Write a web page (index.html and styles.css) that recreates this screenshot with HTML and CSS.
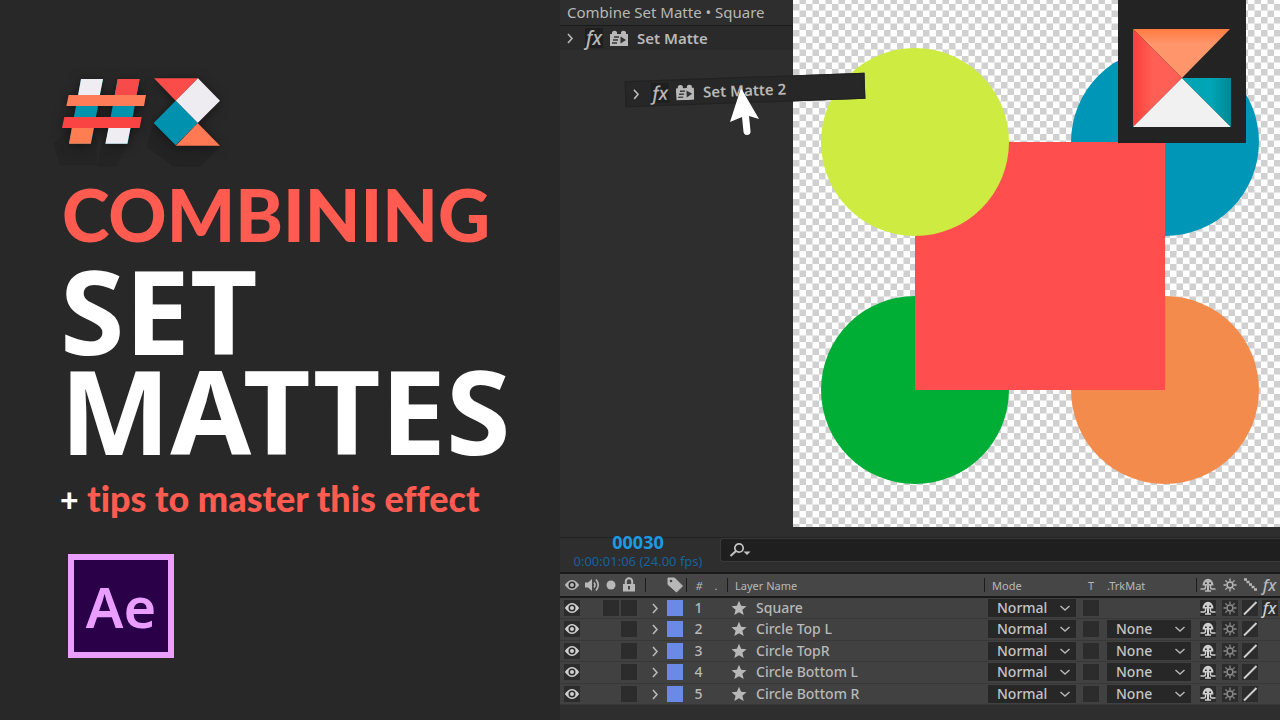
FILE: index.html
```
<!DOCTYPE html>
<html lang="en">
<head>
    <meta charset="UTF-8">
    <meta name="viewport" content="width=device-width, initial-scale=1.0">
    <link rel="stylesheet" href="styles.css">
    <title>Combining Set Mattes</title>
</head>
<body>

<svg class="sprite" aria-hidden="true">
    <symbol id="eye" viewBox="0 0 16 16">
        <path d="M.8 8Q8-2 15.200 8Q8 18 .8 8z" fill="currentColor"/>
        <circle cx="8" cy="8" r="3.500" fill="#2a2a2a"/>
        <circle cx="8" cy="8" r="2" fill="currentColor"/>
    </symbol>
    <symbol id="audio" viewBox="0 0 16 16">
        <path d="M0 5.500h3L7 2v12L3 10.500H0z" fill="currentColor"/>
        <path d="M9 5.500q2 2.500 0 5M11 2.500q4.500 5.500 0 11" fill="none" stroke="currentColor" stroke-width="1.600"/>
    </symbol>
    <symbol id="solo" viewBox="0 0 16 16">
        <circle cx="8" cy="8" r="4.500" fill="currentColor"/>
    </symbol>
    <symbol id="lock" viewBox="0 0 16 16">
        <path d="M4.800 8V4.500a3.200 3.200 0 0 1 6.400 0V8" fill="none" stroke="currentColor" stroke-width="2"/>
        <path d="M2 7h12v7.500H2z" fill="currentColor"/>
        <path d="M8 9v3.500" stroke="#3a3a3a" stroke-width="1.800"/>
    </symbol>
    <symbol id="tag" viewBox="0 0 16 16">
        <path d="M1 1h6.500L15.500 9 9.500 15 1 7.500z" fill="currentColor" stroke="currentColor" stroke-linejoin="round"/>
        <circle cx="4" cy="4" r="1.300" fill="#444"/>
    </symbol>
    <symbol id="chevron" viewBox="0 0 16 16">
        <path d="M6 4l4 4.500L6 13" fill="none" stroke="currentColor" stroke-width="1.600"/>
    </symbol>
    <symbol id="caret" viewBox="0 0 12 12">
        <path d="M1.500 4L6 8l4.500-4" fill="none" stroke="currentColor" stroke-width="1.400"/>
    </symbol>
    <symbol id="star" viewBox="0 0 16 16">
        <path d="M8 .8l2.100 4.900 5.400.5-4.100 3.500 1.300 5.300L8 12.200 3.300 15l1.300-5.300L.5 6.200l5.400-.5z" fill="currentColor"/>
    </symbol>
    <symbol id="shy" viewBox="0 0 16 16">
        <path d="M2.500 8.500a5.500 6.800 0 0 1 11 0z" fill="currentColor"/>
        <path d="M5 6.300h1.800M9.200 6.300H11" stroke="#333" stroke-width="1.400"/>
        <path d="M8 5v9" stroke="currentColor" stroke-width="2"/>
        <path d="M5.500 8v2.500q0 1.500-1.500 1.500H.5M10.500 8v2.500q0 1.500 1.500 1.500h3.500M5 14h6" fill="none" stroke="currentColor" stroke-width="1.500"/>
    </symbol>
    <symbol id="sun" viewBox="0 0 16 16">
        <circle cx="8" cy="8" r="2.900" fill="none" stroke="currentColor" stroke-width="1.500"/>
        <path d="M8 1.500v3M8 11.500v3M1.500 8h3M11.500 8h3M3.400 3.400l2 2M10.600 10.600l2 2M3.400 12.600l2-2M10.600 5.400l2-2" stroke="currentColor" stroke-width="1.300"/>
    </symbol>
    <symbol id="quality" viewBox="0 0 16 16">
        <path d="M2 14.500L14.500 2" stroke="currentColor" stroke-width="1.900"/>
    </symbol>
    <symbol id="steps" viewBox="0 0 16 16">
        <path d="M2 2.500h3M4.500 5h3M7 7.500h3M9.500 10h3M12 12.500h3" stroke="currentColor" stroke-width="2.600"/>
    </symbol>
    <symbol id="brick" viewBox="0 0 18 16">
        <path d="M0 4h2V2q2.500-2.500 5 0v2h4V2q2.500-2.500 5 0v2h2v12H0z" fill="currentColor"/>
        <path d="M4 7h5M3 10h5M2 13h5" stroke="#333" stroke-width="1.400"/>
        <path d="M10.500 6.500v7L16 10z" fill="#333"/>
    </symbol>
</svg>

<main class="page">
    <section class="hero">
        <svg class="episode" viewBox="60 0 540 354" role="img" aria-label="#2">
            <g fill="#1d1d1d">
                <path d="M40 250l60-50 70 30v86H60zM190 230l90-20-50 110h-60z" opacity=".4"/>
                <path d="M342 190l66 66h132v4l-60 60h-80l-80-60z" opacity=".5"/>
            </g>
            <g class="lifted">
                <path d="M123 57h66l-36 194H87z" fill="#0093ad"/>
                <path d="M233 57h66l-36 194h-66z" fill="#0093ad"/>
                <path d="M123 57h66l-10 50h-65z" fill="#efedf1"/>
                <path d="M233 57h66l-10 50h-65z" fill="#f74b4b"/>
                <path d="M96 201h66l-10 50H87z" fill="#ff7d51"/>
                <path d="M206 201h66l-10 50h-66z" fill="#efedf1"/>
                <path d="M86 105h232l-6 33H79z" fill="#ff7c58"/>
                <path d="M73 171h232l-6 33H66z" fill="#fa4444"/>
            </g>
            <g class="lifted">
                <path d="M342 55h132l-67 67z" fill="#fa4c48"/>
                <path d="M474 55l66 67-67 67-66-67z" fill="#eeecf0"/>
                <path d="M407 122l66 67-66 67-66-67z" fill="#0091ae"/>
                <path d="M473 189l67 68H407z" fill="#ff7954"/>
            </g>
        </svg>
        <h1>
            <span class="kicker">COMBINING</span>
            <span class="title">SET<br>MATTES</span>
        </h1>
        <p class="tagline"><span class="plus">+</span> tips to master this effect</p>
        <div class="ae-logo">Ae</div>
    </section>

    <section class="editor">
        <div class="workspace">
            <aside class="effects">
                <h2>Combine Set Matte • Square</h2>
                <div class="effect">
                    <svg class="icon"><use href="#chevron"/></svg>
                    <span class="fx">fx</span>
                    <svg class="brick"><use href="#brick"/></svg>
                    <span>Set Matte</span>
                </div>
            </aside>
            <svg class="stage" viewBox="0 0 487 527" preserveAspectRatio="xMinYMin slice" role="img" aria-label="Composition">
                <defs>
                    <pattern id="checker" y="4" width="13" height="13" patternUnits="userSpaceOnUse">
                        <path d="M0 0h13v13H0z" fill="#fff"/>
                        <path d="M0 0h6.500v6.500H0zM6.500 6.500H13V13H6.500z" fill="#d0d0d0"/>
                    </pattern>
                </defs>
                <path d="M0 0h2000v2000H0z" fill="url(#checker)"/>
                <circle cx="122" cy="390" r="94" fill="#00ae36"/>
                <circle cx="372" cy="390" r="94" fill="#f38b4c"/>
                <circle cx="372" cy="142" r="94" fill="#0096b7"/>
                <path d="M122 142h250v248H122z" fill="#ff4e4d"/>
                <circle cx="122" cy="142" r="94" fill="#cdeb40"/>
            </svg>

            <!-- effect being dragged over the panel -->
            <div class="effect dragged">
                <svg class="icon"><use href="#chevron"/></svg>
                <span class="fx">fx</span>
                <svg class="brick"><use href="#brick"/></svg>
                <span>Set Matte 2</span>
            </div>
            <svg class="cursor" viewBox="0 0 30 48" aria-hidden="true">
                <path d="M11 0l18 31-10-3 1.500 15a3.500 3.500 0 0 1-7 .8L12 29 0 34z" fill="#fff"/>
            </svg>

            <div class="brand">
                <svg viewBox="0 0 98 98" role="img" aria-label="Channel logo">
                    <defs>
                        <linearGradient id="orange" x2="0" y2="1"><stop stop-color="#ff7b40"/><stop offset=".3" stop-color="#ff956b"/></linearGradient>
                        <linearGradient id="red"><stop stop-color="#fb3f3b"/><stop offset=".4" stop-color="#ff5f54"/></linearGradient>
                        <linearGradient id="teal" x1="1" x2="0"><stop stop-color="#008796"/><stop offset=".4" stop-color="#00a5b5"/></linearGradient>
                    </defs>
                    <path d="M0 0h97L49 49z" fill="url(#orange)"/>
                    <path d="M0 0l49 49L0 98z" fill="url(#red)"/>
                    <path d="M49 49l49 49H0z" fill="#f1f1f1"/>
                    <path d="M49 49h49v49z" fill="url(#teal)"/>
                </svg>
            </div>
        </div>

        <div class="timeline">
            <div class="toolbar">
                <div class="time">
                    <strong>00030</strong>
                    <span>0:00:01:06 (24.00 fps)</span>
                </div>
                <label class="search">
                    <svg viewBox="0 0 22 16" aria-hidden="true">
                        <circle cx="10" cy="6" r="4.200" fill="none" stroke="currentColor" stroke-width="1.700"/>
                        <path d="M7 9l-5.500 5" stroke="currentColor" stroke-width="2"/>
                        <path d="M14.500 9.500h7L18 13z" fill="currentColor"/>
                    </svg>
                    <input type="search" aria-label="Search layers">
                </label>
            </div>
            <table>
                <colgroup>
                    <col class="w24"><col class="w17"><col class="w19"><col class="w25">
                    <col class="w19"><col class="w22"><col class="w41"><col>
                    <col class="w96"><col class="w22"><col class="w94">
                    <col class="w24"><col class="w20"><col class="w19"><col class="w21">
                </colgroup>
                <thead>
                    <tr>
                        <th><svg class="icon"><use href="#eye"/></svg></th>
                        <th><svg class="icon"><use href="#audio"/></svg></th>
                        <th><svg class="icon"><use href="#solo"/></svg></th>
                        <th class="start"><svg class="icon"><use href="#lock"/></svg></th>
                        <th class="sep"></th>
                        <th><svg class="icon"><use href="#tag"/></svg></th>
                        <th class="sep number"><i>#</i><span>.</span></th>
                        <th class="sep name">Layer Name</th>
                        <th class="sep name">Mode</th>
                        <th>T</th>
                        <th class="trk">.TrkMat</th>
                        <th class="sep"><svg class="icon"><use href="#shy"/></svg></th>
                        <th><svg class="icon"><use href="#sun"/></svg></th>
                        <th><svg class="icon"><use href="#steps"/></svg></th>
                        <th><span class="fx small">fx</span></th>
                    </tr>
                </thead>
                <tbody id="layers"></tbody>
            </table>
        </div>
    </section>
</main>

<script>
    const layers = ['Square', 'Circle Top L', 'Circle TopR', 'Circle Bottom L', 'Circle Bottom R'];

    function icon(name) {
        return `<svg class="icon"><use href="#${name}"/></svg>`;
    }

    function toggle(name, label) {
        return `<button class="box" aria-label="${label}">${icon(name)}</button>`;
    }

    function dropdown(value, label) {
        return `<div class="dropdown">
            <select aria-label="${label}"><option>${value}</option></select>
            <svg><use href="#caret"/></svg>
        </div>`;
    }

    document.getElementById('layers').innerHTML = layers.map((layer, i) => `
        <tr>
            <td>${toggle('eye', 'Show ' + layer)}</td>
            <td></td>
            <td>${i === 0 ? '<input type="checkbox" class="box" aria-label="Solo ' + layer + '">' : ''}</td>
            <td class="start"><input type="checkbox" class="box" aria-label="Lock ${layer}"></td>
            <td class="twirl">${icon('chevron')}</td>
            <td><span class="swatch"></span></td>
            <td class="index">${i + 1}</td>
            <td><div class="layer">${icon('star')}<span>${layer}</span></div></td>
            <td>${dropdown('Normal', 'Mode of ' + layer)}</td>
            <td><input type="checkbox" class="box" aria-label="Preserve transparency of ${layer}"></td>
            <td class="matte">${i > 0 ? dropdown('None', 'Track matte of ' + layer) : ''}</td>
            <td>${toggle('shy', 'Shy')}</td>
            <td class="dim">${toggle('sun', 'Collapse')}</td>
            <td>${toggle('quality', 'Quality')}</td>
            <td>${i === 0 ? '<button class="box fx small">fx</button>' : ''}</td>
        </tr>`).join('');
</script>
</body>
</html>
```
FILE: styles.css
```
* {
    box-sizing: border-box;
}

body {
    margin: 0;
    background: #282828;
    color: #b8b8b8;
    font-family: "Noto Sans", sans-serif;
    font-size: 14px;
}

h1, h2, p {
    margin: 0;
}

svg {
    display: block;
}

.sprite {
    position: absolute;
    width: 0;
    height: 0;
}

.page {
    display: grid;
    grid-template-columns: 43.75% 1fr;
    min-height: 100vh;
}

/* left side */

.hero {
    padding: 60px 0 0 60px;
}

.episode {
    width: 180px;
    height: 118px;
    overflow: visible;
}

.lifted {
    filter: drop-shadow(0 6px 16px #151515);
}

.kicker {
    display: block;
    padding-left: 2px;
    color: #ff5b51;
    font: 900 72px/72px Lato, sans-serif;
}

.title {
    display: block;
    margin-top: 10px;
    color: white;
    font-size: 117px;
    font-weight: 700;
    line-height: 100px;
}

.tagline {
    margin-top: 18px;
    color: #ff5b51;
    font: 900 36px/40px Lato, sans-serif;
    font-variant-ligatures: none;
}

.plus {
    color: white;
    font-size: 32px;
}

.ae-logo {
    display: flex;
    align-items: center;
    justify-content: center;
    width: 106px;
    height: 104px;
    margin: 34px 0 0 8px;
    border: 6px solid #ea9eff;
    background: #2a0049;
    color: #ea9eff;
    font: 600 56px/60px "Noto Sans", sans-serif;
}

/* editor */

.editor {
    display: flex;
    flex-direction: column;
    min-width: 0;
    background: #2e2e2e;
}

.workspace {
    position: relative;
    display: grid;
    grid-template-columns: 233px 1fr;
    flex: 1;
    min-height: 0;
}

.stage {
    width: 100%;
    height: 100%;
    min-height: 0;
}

.effects h2 {
    height: 26px;
    padding-left: 7px;
    border-bottom: 1px solid #1a1a1a;
    font-size: 15px;
    font-weight: 400;
    line-height: 24px;
}

.effect {
    display: flex;
    align-items: center;
    height: 24px;
    padding-left: 2px;
    background: #2a2a2a;
    font-size: 15px;
    font-weight: 600;
}

.icon {
    flex: none;
    width: 16px;
    height: 16px;
}

.brick {
    width: 18px;
    height: 16px;
    margin: 0 9px 0 7px;
}

.fx {
    width: 18px;
    margin-left: 7px;
    background: #1f1f1f;
    font: italic 500 19px/20px "Noto Sans", sans-serif;
    text-align: center;
}

.fx.small {
    margin: 0;
    background: none;
    font-size: 16px;
    line-height: 16px;
}

.dragged {
    position: absolute;
    top: 77px;
    left: 65px;
    width: 240px;
    height: 26px;
    border: 1px solid #222;
    background: #272727;
    transform: rotate(-2deg);
}

.cursor {
    position: absolute;
    top: 88px;
    left: 170px;
    width: 30px;
    height: 48px;
}

.brand {
    position: absolute;
    top: 0;
    right: 34px;
    padding: 29px 15px 16px;
    background: #232323;
}

.brand svg {
    width: 98px;
    height: 98px;
}

/* timeline */

.timeline {
    margin-top: 10px;
    padding-bottom: 16px;
    border-top: 1px solid #222;
}

.toolbar {
    display: flex;
    height: 34px;
}

.time {
    display: flex;
    flex-direction: column;
    width: 160px;
    padding-right: 4px;
    text-align: center;
}

.time strong {
    color: #1a9be6;
    font-size: 18px;
    line-height: 8px;
}

.time span {
    margin-top: 7px;
    color: #15639b;
    font-size: 13px;
    line-height: 16px;
}

.search {
    display: flex;
    flex: 1;
    align-items: center;
    height: 24px;
    padding-left: 8px;
    border: 1px solid #3a3a3a;
    border-right: 0;
    border-radius: 3px 0 0 3px;
    background: #1f1f1f;
    color: #c4c4c4;
}

.search svg {
    width: 22px;
    height: 16px;
}

.search input {
    flex: 1;
    min-width: 0;
    border: 0;
    outline: 0;
    background: none;
    color: inherit;
}

table {
    width: 100%;
    border-collapse: collapse;
    table-layout: fixed;
    background: #414141;
}

.w17 { width: 17px; }
.w19 { width: 19px; }
.w20 { width: 20px; }
.w21 { width: 21px; }
.w22 { width: 22px; }
.w24 { width: 24px; }
.w25 { width: 25px; }
.w41 { width: 41px; }
.w94 { width: 94px; }
.w96 { width: 96px; }

th, td {
    padding: 0;
}

thead tr {
    height: 24px;
    border-top: 2px solid #191919;
    border-bottom: 2px solid #191919;
    background: #464646;
}

th {
    font-size: 11px;
    font-weight: 400;
}

th .icon, .twirl .icon, .box, .swatch {
    margin: 0 auto;
}

th.start .icon, .start .box {
    margin-left: 1px;
}

.sep {
    background: linear-gradient(#1c1c1c, #1c1c1c) left center / 1px 14px no-repeat;
}

.name {
    padding-left: 8px;
    text-align: left;
}

.number i {
    margin-right: 12px;
}

.trk {
    padding-left: 5px;
    text-align: left;
}

tbody tr {
    height: 21px;
    border-bottom: 1px solid #383838;
}

tbody tr:nth-child(even) {
    height: 22px;
}

.box {
    display: block;
    width: 16px;
    height: 16px;
    padding: 0;
    border: 0;
    appearance: none;
    background: #2c2c2c;
    color: #cfcfcf;
}

.box.fx.small {
    margin: 0 auto;
    background: #2c2c2c;
}

.dim .box {
    color: #8a8a8a;
}

.swatch {
    display: block;
    width: 16px;
    height: 16px;
    background: #6a8ae8;
}

.index {
    padding-right: 16px;
    font-weight: 500;
    line-height: 18px;
    text-align: center;
}

.layer {
    display: flex;
    align-items: center;
    gap: 9px;
    padding-left: 4px;
    font-weight: 500;
    line-height: 18px;
    white-space: nowrap;
}

.dropdown {
    position: relative;
    width: 88px;
    margin-left: 4px;
}

.matte .dropdown {
    width: 84px;
    margin-left: 5px;
}

.dropdown select {
    display: block;
    width: 100%;
    height: 18px;
    padding: 0 0 0 9px;
    border: 0;
    appearance: none;
    background: #272727;
    color: #c4c4c4;
    font: 500 14px/18px "Noto Sans", sans-serif;
}

.dropdown svg {
    position: absolute;
    top: 3px;
    right: 5px;
    width: 12px;
    height: 12px;
    pointer-events: none;
}
```
